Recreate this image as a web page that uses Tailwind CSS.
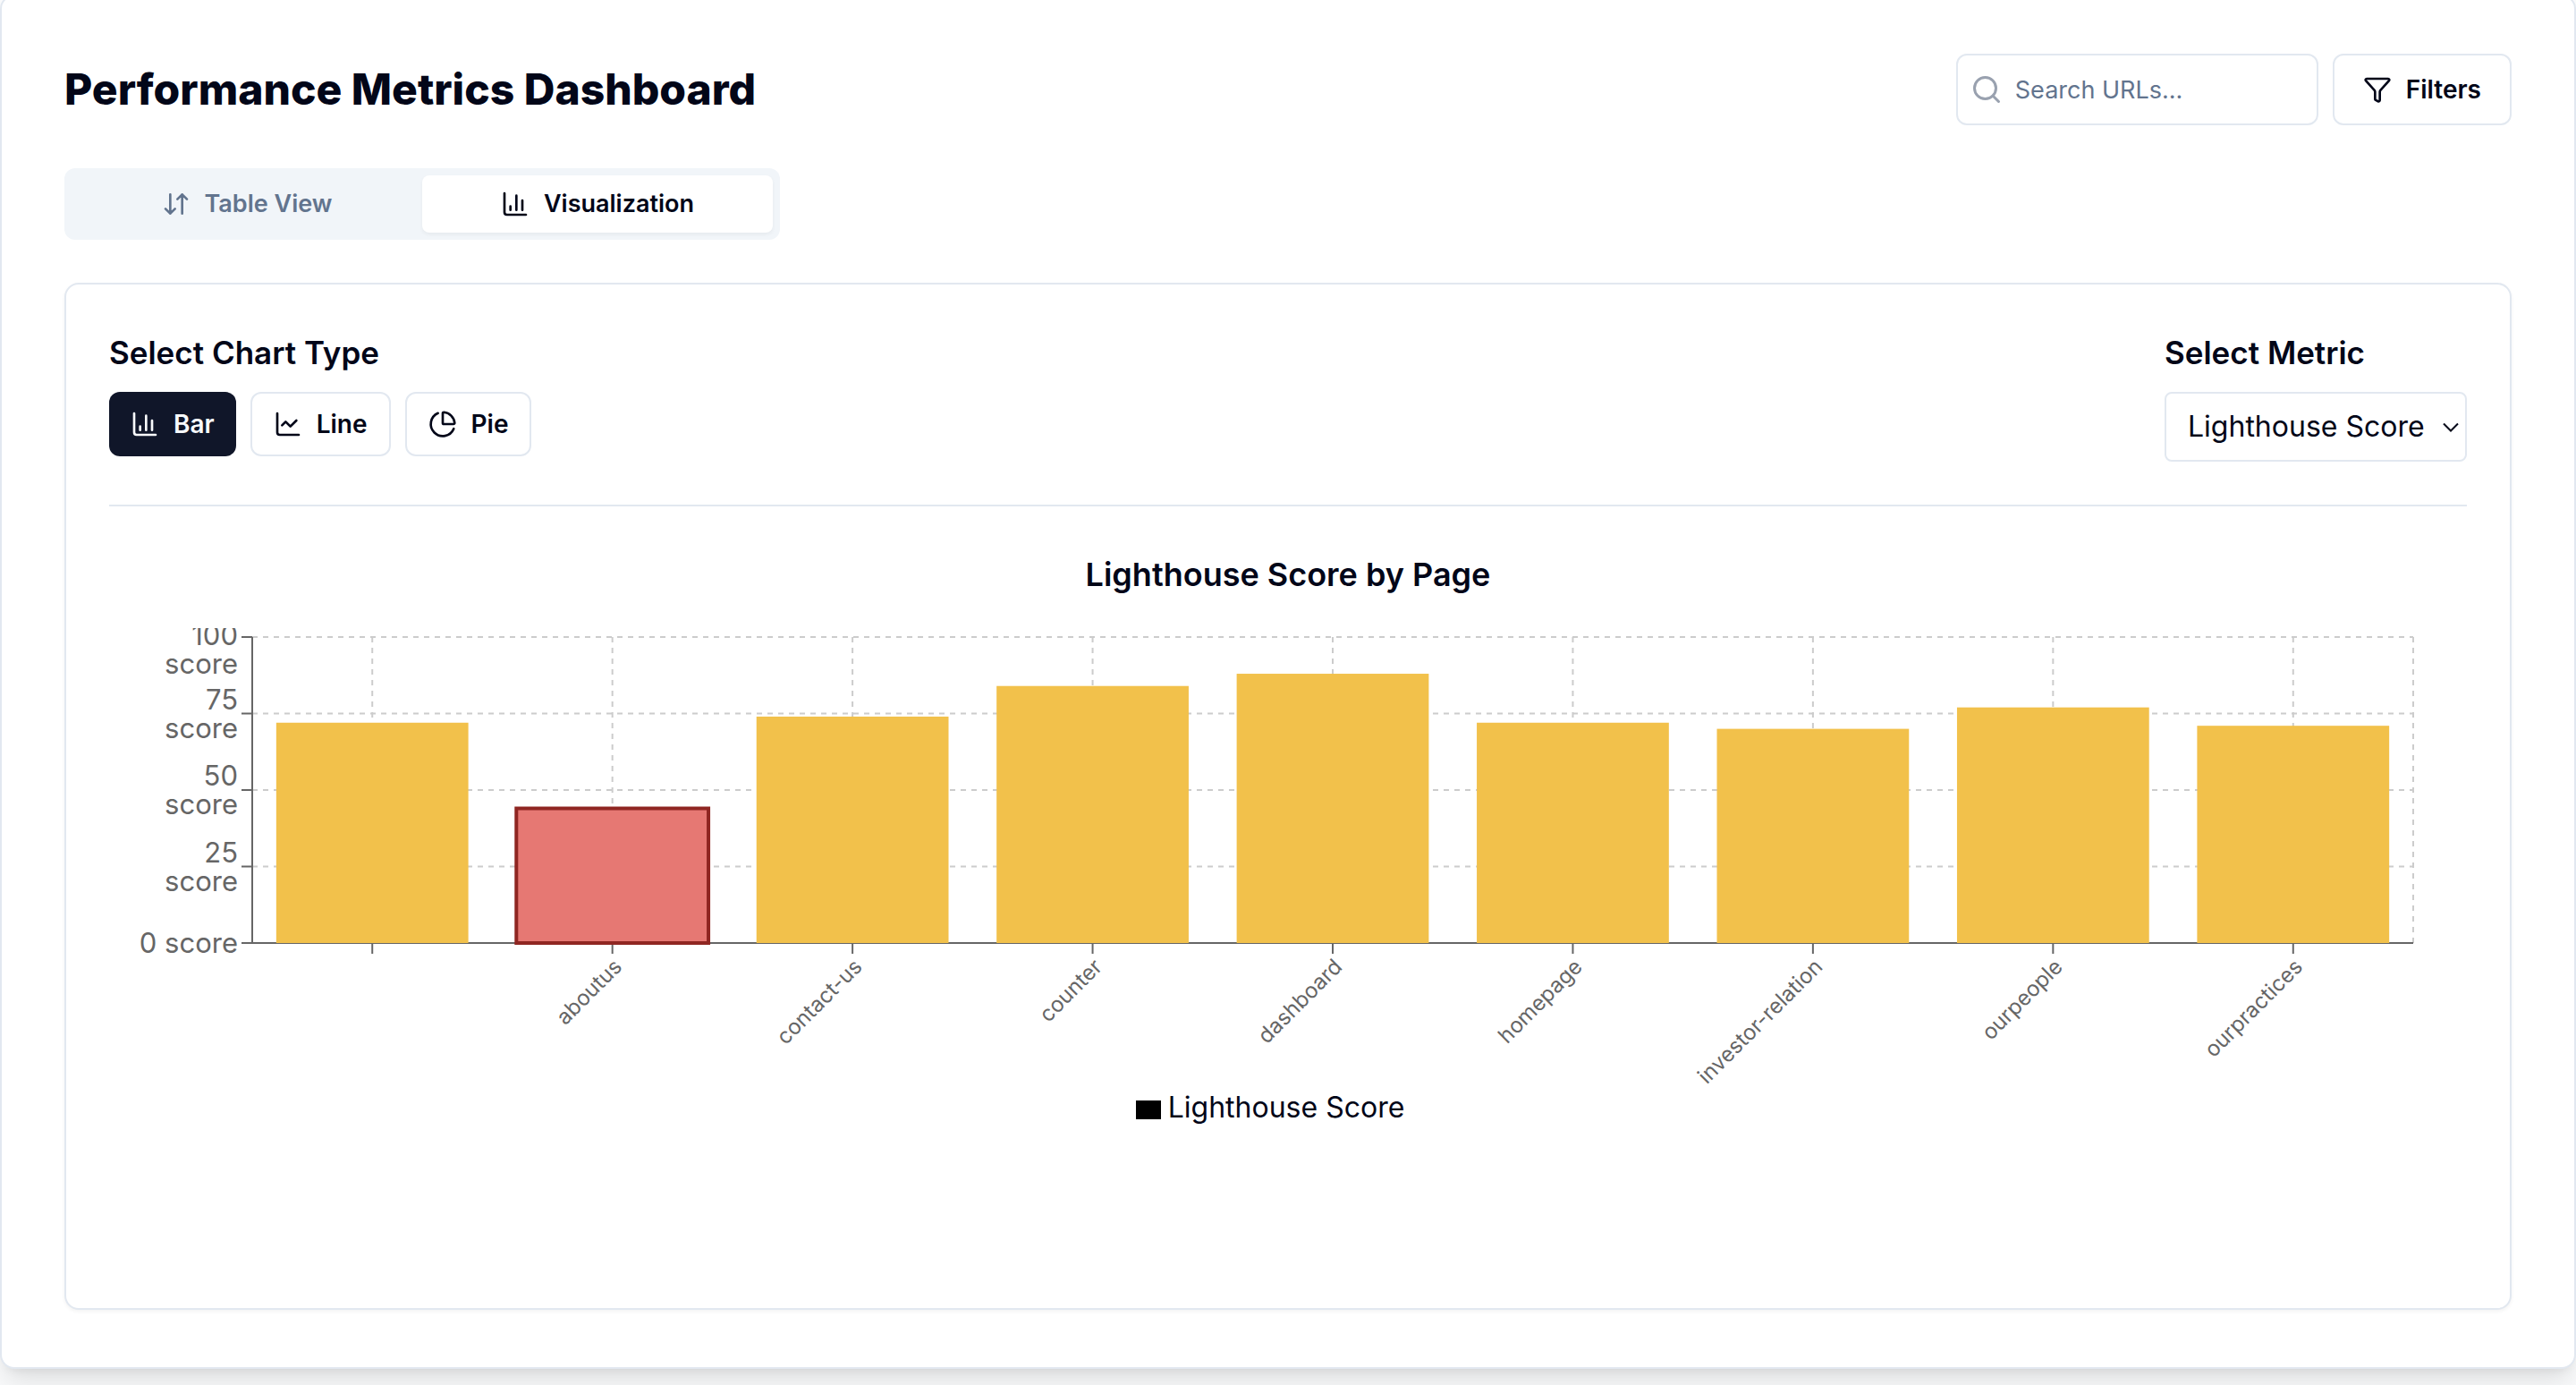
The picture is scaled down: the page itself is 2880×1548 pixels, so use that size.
<!DOCTYPE html>
<html lang="en">
<head>
<meta charset="utf-8">
<meta name="viewport" content="width=device-width, initial-scale=1">
<title>Performance Metrics Dashboard</title>
<script src="https://cdn.jsdelivr.net/npm/@tailwindcss/browser@4"></script>
</head>
<body class="min-h-screen bg-gray-50 font-['Inter',sans-serif] text-slate-950">
<!-- Icon set -->
<svg class="hidden" aria-hidden="true">
  <symbol id="i-sort" viewBox="0 0 24 24"><path d="m3 16 4 4 4-4M7 20V4M21 8l-4-4-4 4M17 4v16"/></symbol>
  <symbol id="i-bar" viewBox="0 0 24 24"><path d="M3 3v16a2 2 0 0 0 2 2h16M18 17V9M13 17V5M8 17v-3"/></symbol>
  <symbol id="i-line" viewBox="0 0 24 24"><path d="M3 3v16a2 2 0 0 0 2 2h16M19 9l-5 5-4-4-3 3"/></symbol>
  <symbol id="i-pie" viewBox="0 0 24 24"><path d="M21 12c.552 0 1.005-.449.95-.998a10 10 0 0 0-8.953-8.951c-.55-.055-.998.398-.998.95v8a1 1 0 0 0 1 1z"/><path d="M21.21 15.89A10 10 0 1 1 8 2.83"/></symbol>
  <symbol id="i-funnel" viewBox="0 0 24 24"><path d="M10 20a1 1 0 0 0 .553.895l2 1A1 1 0 0 0 14 21v-7a2 2 0 0 1 .517-1.341L21.74 4.67A1 1 0 0 0 21 3H3a1 1 0 0 0-.742 1.67l7.225 7.989A2 2 0 0 1 10 14z"/></symbol>
  <symbol id="i-search" viewBox="0 0 24 24"><circle cx="11" cy="11" r="8"/><path d="m21 21-4.34-4.34"/></symbol>
</svg>

<main class="-mt-1.5 rounded-2xl border-2 border-slate-200 bg-white px-[70px] py-16 shadow-[0_20px_30px_-6px_#0000001a,0_8px_12px_-8px_#0000001a]">
  <header class="mb-12 flex items-center justify-between">
    <h1 class="text-[48px] leading-[64px] font-extrabold">Performance Metrics Dashboard</h1>
    <div class="flex gap-4">
      <div class="relative">
        <svg class="absolute left-4 top-[22px] size-9 fill-none stroke-gray-400 stroke-2 [stroke-linecap:round] [stroke-linejoin:round]" aria-hidden="true"><use href="#i-search"/></svg>
        <input type="search" aria-label="Search URLs" placeholder="Search URLs..." class="h-20 w-[405px] rounded-xl border-2 border-slate-200 bg-white pr-6 pl-16 text-[27px] placeholder:text-slate-500">
      </div>
      <button type="button" class="flex h-20 items-center gap-4 rounded-xl border-2 border-slate-200 bg-white px-8 text-[28px] font-semibold">
        <svg class="size-8 fill-none stroke-current stroke-2 [stroke-linecap:round] [stroke-linejoin:round]" aria-hidden="true"><use href="#i-funnel"/></svg>Filters
      </button>
    </div>
  </header>

  <div role="tablist" class="mb-12 grid h-20 w-[800px] grid-cols-2 rounded-xl bg-slate-100 p-2 text-[27px] font-semibold">
    <button type="button" role="tab" aria-selected="false" class="flex items-center justify-center gap-4 rounded-lg text-slate-500">
      <svg class="size-8 fill-none stroke-current stroke-2 [stroke-linecap:round] [stroke-linejoin:round]" aria-hidden="true"><use href="#i-sort"/></svg>Table View
    </button>
    <button type="button" role="tab" aria-selected="true" class="flex items-center justify-center gap-4 rounded-lg bg-white shadow-[0_2px_4px_0_#0000000d]">
      <svg class="size-8 fill-none stroke-current stroke-2 [stroke-linecap:round] [stroke-linejoin:round]" aria-hidden="true"><use href="#i-bar"/></svg>Visualization
    </button>
  </div>

  <section class="rounded-2xl border-2 border-slate-200 bg-white p-12 shadow-[0_2px_4px_0_#0000000d]">
    <div class="flex items-start justify-between border-b-2 border-slate-200 pb-12">
      <div>
        <h2 class="mb-4 text-[35px] leading-[56px] font-semibold">Select Chart Type</h2>
        <div class="flex gap-4 text-[28px] font-semibold">
          <button type="button" class="flex h-[72px] items-center gap-4 rounded-xl bg-[#101629] px-6 text-slate-50">
            <svg class="size-8 fill-none stroke-current stroke-2 [stroke-linecap:round] [stroke-linejoin:round]" aria-hidden="true"><use href="#i-bar"/></svg>Bar
          </button>
          <button type="button" class="flex h-[72px] items-center gap-4 rounded-xl border-2 border-slate-200 px-6">
            <svg class="size-8 fill-none stroke-current stroke-2 [stroke-linecap:round] [stroke-linejoin:round]" aria-hidden="true"><use href="#i-line"/></svg>Line
          </button>
          <button type="button" class="flex h-[72px] items-center gap-4 rounded-xl border-2 border-slate-200 px-6">
            <svg class="size-8 fill-none stroke-current stroke-2 [stroke-linecap:round] [stroke-linejoin:round]" aria-hidden="true"><use href="#i-pie"/></svg>Pie
          </button>
        </div>
      </div>
      <div>
        <label for="metric" class="mb-4 block text-[35px] leading-[56px] font-semibold">Select Metric</label>
        <div class="relative">
          <select id="metric" class="block h-[78px] w-[338px] appearance-none rounded-lg border-2 border-slate-200 bg-white pl-6 text-[32px]">
            <option>Lighthouse Score</option>
          </select>
          <svg class="pointer-events-none absolute right-2 top-[34px] h-3 w-5 fill-none stroke-current stroke-2" viewBox="0 0 20 12" aria-hidden="true"><path d="M2 1.500l8 8 8-8"/></svg>
        </div>
      </div>
    </div>

    <h3 class="mt-12 mb-8 text-center text-[36px] leading-[56px] font-semibold">Lighthouse Score by Page</h3>

    <div class="min-h-[712px]">
      <div class="flex overflow-hidden pr-[60px]">
        <!-- Value axis -->
        <svg class="h-[512px] w-40 shrink-0" aria-hidden="true">
          <g class="fill-[#666] text-[31px]" text-anchor="end">
            <text x="144" y="19">100</text><text x="144" y="51">score</text>
            <text x="144" y="91">75</text><text x="144" y="123">score</text>
            <text x="144" y="176">50</text><text x="144" y="208">score</text>
            <text x="144" y="262">25</text><text x="144" y="294">score</text>
            <text x="144" y="363">0 score</text>
          </g>
          <path class="stroke-[#666] stroke-2" d="M148 10h12M148 95.500h12M148 181h12M148 266.500h12M148 352h12"/>
        </svg>
        <!-- Plot area; the script fills the bands from the data -->
        <svg id="plot" class="h-[512px] min-w-0 flex-1 overflow-visible" role="img" aria-label="Lighthouse score by page, bar chart"></svg>
      </div>
      <div class="flex items-center justify-center gap-2 text-[32px] leading-[48px]">
        <svg class="mt-1 h-[21px] w-7 fill-black" aria-hidden="true"><rect width="28" height="21"/></svg>
        <span class="pr-10">Lighthouse Score</span>
      </div>
    </div>
  </section>
</main>

<script>
  const data = [
    ['', 72], ['aboutus', 44], ['contact-us', 74], ['counter', 84], ['dashboard', 88],
    ['homepage', 72], ['investor-relation', 70], ['ourpeople', 77], ['ourpractices', 71]
  ];
  const base = 352, band = 100 / data.length;
  let grid = '', bars = '', ticks = '';
  for (const y of [10, 95.5, 181, 266.5]) grid += `<line x1="0" x2="100%" y1="${y}" y2="${y}"/>`;
  data.forEach(([name, value], i) => {
    const mid = (i + 0.5) * band, h = value / 100 * (base - 10), low = value < 50;
    grid += `<line x1="${mid}%" x2="${mid}%" y1="10" y2="${base}"/>`;
    bars += `<rect x="${(i + 0.1) * band}%" y="${base - h}" width="${0.8 * band}%" height="${h}" fill="${low ? '#e67873' : '#f2c14b'}" ${low ? 'stroke="#8f2622" stroke-width="4"' : ''}/>`;
    ticks += `<line x1="${mid}%" x2="${mid}%" y1="${base}" y2="364" stroke="#666" stroke-width="2"/>
      <svg x="${mid}%" y="368" overflow="visible"><text transform="rotate(-45)" y="17" text-anchor="end" font-size="24" fill="#666">${name}</text></svg>`;
  });
  grid += `<line x1="100%" x2="100%" y1="10" y2="${base}"/>`;
  document.getElementById('plot').innerHTML =
    `<g stroke="#ccc" stroke-width="2" stroke-dasharray="6 6">${grid}</g>
     <g stroke="#666" stroke-width="2"><line x1="0" x2="0" y1="10" y2="${base}"/><line x1="0" x2="100%" y1="${base}" y2="${base}"/></g>
     ${ticks}${bars}`;
</script>
</body>
</html>
